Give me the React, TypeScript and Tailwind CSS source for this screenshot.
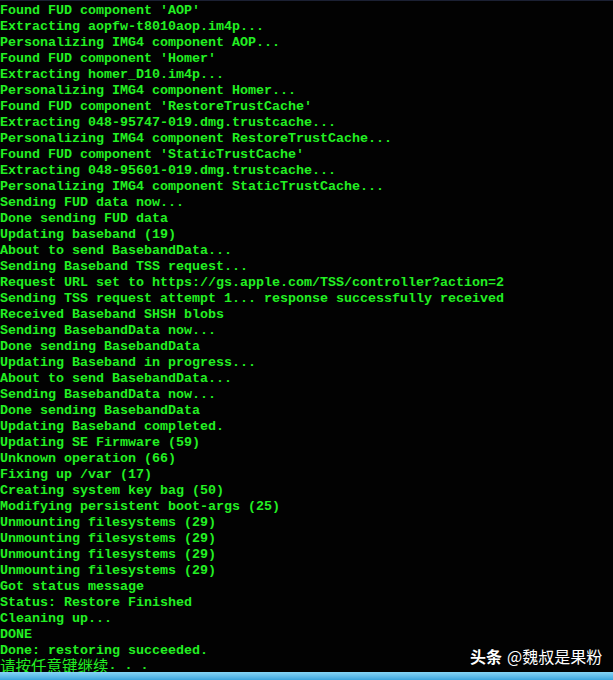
import React from "react";

const lines = [
  "Found FUD component 'AOP'",
  "Extracting aopfw-t8010aop.im4p...",
  "Personalizing IMG4 component AOP...",
  "Found FUD component 'Homer'",
  "Extracting homer_D10.im4p...",
  "Personalizing IMG4 component Homer...",
  "Found FUD component 'RestoreTrustCache'",
  "Extracting 048-95747-019.dmg.trustcache...",
  "Personalizing IMG4 component RestoreTrustCache...",
  "Found FUD component 'StaticTrustCache'",
  "Extracting 048-95601-019.dmg.trustcache...",
  "Personalizing IMG4 component StaticTrustCache...",
  "Sending FUD data now...",
  "Done sending FUD data",
  "Updating baseband (19)",
  "About to send BasebandData...",
  "Sending Baseband TSS request...",
  "Request URL set to https://gs.apple.com/TSS/controller?action=2",
  "Sending TSS request attempt 1... response successfully received",
  "Received Baseband SHSH blobs",
  "Sending BasebandData now...",
  "Done sending BasebandData",
  "Updating Baseband in progress...",
  "About to send BasebandData...",
  "Sending BasebandData now...",
  "Done sending BasebandData",
  "Updating Baseband completed.",
  "Updating SE Firmware (59)",
  "Unknown operation (66)",
  "Fixing up /var (17)",
  "Creating system key bag (50)",
  "Modifying persistent boot-args (25)",
  "Unmounting filesystems (29)",
  "Unmounting filesystems (29)",
  "Unmounting filesystems (29)",
  "Unmounting filesystems (29)",
  "Got status message",
  "Status: Restore Finished",
  "Cleaning up...",
  "DONE",
  "Done: restoring succeeded.",
];

export default function App() {
  return (
    <div className="relative flex h-[680px] w-[613px] flex-col overflow-hidden bg-[#020202]">
      <div className="h-px w-full shrink-0 bg-[#1b2033]" />
      <div className="min-h-0 flex-1 pt-[2px] font-['Liberation_Mono',monospace] text-[13.333px] font-bold leading-[16px] text-[#22f022]">
        {lines.map((l, i) => (
          <div key={i} className="h-[16px] whitespace-pre">
            {l}
          </div>
        ))}
        <div className="flex h-[13px] items-end whitespace-pre">
          <span className="font-['Noto_Sans_CJK_SC',sans-serif] text-[15.5px] font-normal leading-[13px]">
            请按任意键继续
          </span>
          <span className="leading-[13px]">. . .</span>
        </div>
      </div>
      <div className="h-[8px] w-full shrink-0 bg-gradient-to-b from-[#86d6f6] to-[#3aa6de]" />
      <div className="absolute left-[470px] top-[646px] flex items-center gap-[5px] font-['Noto_Sans_CJK_SC',sans-serif] text-[16px] leading-[20px] text-white">
        <span className="font-bold">头条</span>
        <span>@魏叔是果粉</span>
      </div>
    </div>
  );
}
